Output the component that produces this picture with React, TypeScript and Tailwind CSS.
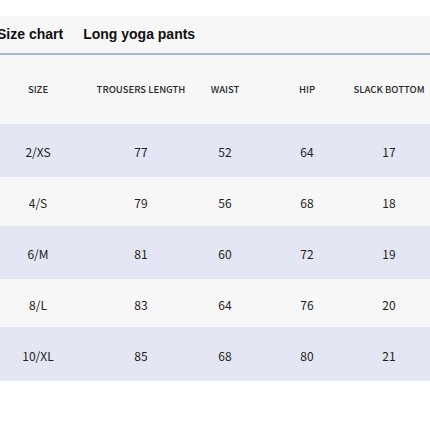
import React from "react";

const rows = [
  ["2/XS", "77", "52", "64", "17"],
  ["4/S", "79", "56", "68", "18"],
  ["6/M", "81", "60", "72", "19"],
  ["8/L", "83", "64", "76", "20"],
  ["10/XL", "85", "68", "80", "21"],
];
const heads = ["SIZE", "TROUSERS LENGTH", "WAIST", "HIP", "SLACK BOTTOM"];
const heights = ["h-[53px]", "h-[49px]", "h-[53px]", "h-[48px]", "h-[54px]"];

export default function App() {
  return (
    <div className="w-[430px] h-[430px] bg-white overflow-hidden" style={{ fontFamily: '"Noto Sans CJK SC", "Noto Sans", sans-serif' }}>
      <div className="h-[16px]" />
      <div className="h-[37px] bg-[#f7f7f7] flex items-center gap-[20px]" style={{ fontFamily: '"Liberation Sans", Arial, sans-serif' }}>
        <span className="text-[14px] font-bold text-[#111] ml-[-3px]">Size chart</span>
        <span className="text-[14px] font-bold text-[#111]">Long yoga pants</span>
      </div>
      <div className="h-[2px] bg-[#a7b8d4]" />
      <div className="h-[69px] bg-[#f7f7f7] grid grid-cols-[76px_130px_38px_126px_38px] items-center text-[9.5px] font-medium text-[#2a2a2a]">
        {heads.map((h) => (
          <div key={h} className="flex justify-center whitespace-nowrap mt-[-1px]">{h}</div>
        ))}
      </div>
      {rows.map((r, i) => (
        <div
          key={r[0]}
          className={`${heights[i]} ${i % 2 === 0 ? "bg-[#e4e6f3]" : "bg-[#f7f7f7]"} grid grid-cols-[76px_130px_38px_126px_38px] items-center pt-[3px] text-[12px] text-[#222]`}
        >
          {r.map((c, j) => (
            <div key={j} className="flex justify-center whitespace-nowrap">{c}</div>
          ))}
        </div>
      ))}
    </div>
  );
}
